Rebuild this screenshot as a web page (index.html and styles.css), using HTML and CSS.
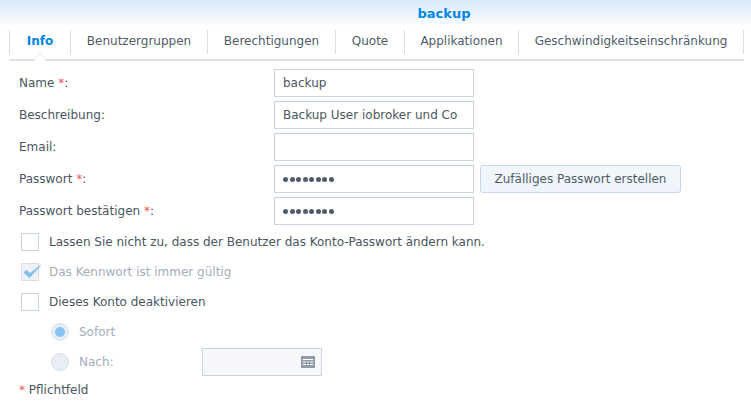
FILE: index.html
```
<!DOCTYPE html>
<html lang="de">
<head>
<meta charset="utf-8">
<title>backup</title>
<link rel="stylesheet" href="styles.css">
</head>
<body>
<header class="title-bar"><span class="title">backup</span></header>
<nav class="tabs">
  <span class="tab tab-active tab-info">Info</span>
  <span class="tab tab-groups">Benutzergruppen</span>
  <span class="tab tab-perm">Berechtigungen</span>
  <span class="tab tab-quota">Quote</span>
  <span class="tab tab-apps">Applikationen</span>
  <span class="tab tab-speed">Geschwindigkeitseinschränkung</span>
  <span class="tab-arrow"></span>
</nav>
<main class="form">
  <div class="row"><label class="label">Name <em>*</em>:</label><div class="input">backup</div></div>
  <div class="row"><label class="label">Beschreibung:</label><div class="input">Backup User iobroker und Co</div></div>
  <div class="row"><label class="label">Email:</label><div class="input"></div></div>
  <div class="row"><label class="label">Passwort <em>*</em>:</label><div class="input pw"><i></i><i></i><i></i><i></i><i></i><i></i><i></i><i></i></div><button class="btn">Zufälliges Passwort erstellen</button></div>
  <div class="row"><label class="label">Passwort bestätigen <em>*</em>:</label><div class="input pw"><i></i><i></i><i></i><i></i><i></i><i></i><i></i><i></i></div></div>
  <div class="checks">
    <div class="check"><span class="box"></span>Lassen Sie nicht zu, dass der Benutzer das Konto-Passwort ändern kann.</div>
    <div class="check disabled"><span class="box box-on"><svg width="20" height="18" viewBox="0 0 20 18"><path d="M2 9.5 L7.5 14.5 L18.5 2.5 L8 10.5 L4.5 7.5 Z" fill="#85bdec" stroke="#85bdec" stroke-width="1" stroke-linejoin="round"/></svg></span>Das Kennwort ist immer gültig</div>
    <div class="check"><span class="box"></span>Dieses Konto deaktivieren</div>
    <div class="check sub disabled"><span class="radio radio-on"></span>Sofort</div>
    <div class="check sub disabled"><span class="radio"></span><span class="after-label">Nach:</span><div class="date"><svg width="14" height="12" viewBox="0 0 14 12"><rect width="14" height="12" fill="#8f9ba8"/><path d="M2 3h10v1H2zM2 5.500h3v1H2zM6 5.500h2v1H6zM9 5.500h3v1H9zM2 8h3v1H2zM6 8h2v1H6zM9 8h3v1H9z" fill="#fff"/></svg></div></div>
  </div>
  <div class="note"><em>*</em> Pflichtfeld</div>
</main>
</body>
</html>
```
FILE: styles.css
```
* { box-sizing: border-box; }
html, body { margin: 0; padding: 0; }
body {
  width: 751px;
  height: 401px;
  overflow: hidden;
  background: #fff;
  font-family: "DejaVu Sans", Verdana, sans-serif;
  font-size: 12px;
  color: #4a5560;
}
em { font-style: normal; color: #f0575a; }
.title-bar {
  height: 30px;
  background: linear-gradient(#d8e9f9, #ffffff 92%);
  display: flex;
  justify-content: center;
  padding: 6px 0 0 137px;
}
.title { font-weight: 700; color: #0086e5; font-size: 13px; line-height: 15px; }
.tabs {
  position: relative;
  display: flex;
  height: 31px;
  margin-left: 9px;
  width: 735px;
  border-bottom: 2px solid #dde3e8;
  align-items: flex-start;
}
.tab {
  height: 24px;
  line-height: 23px;
  text-align: center;
  border-left: 1px solid #d3dde8;
  color: #4f5b68;
}
.tab-info { width: 61px; }
.tab-groups { width: 137px; }
.tab-perm { width: 128px; }
.tab-quota { width: 69px; }
.tab-apps { width: 114px; }
.tab-speed { width: 226px; border-right: 1px solid #d3dde8; }
.tab-active { color: #0086e5; font-weight: 700; }
.tab-arrow {
  position: absolute;
  left: 25px;
  top: 23px;
  width: 12px;
  height: 12px;
  background: #fff;
  border-left: 1px solid #dde3e8;
  border-top: 1px solid #dde3e8;
  transform: rotate(45deg) scale(.7);
}
.form { padding: 8px 0 0 19px; }
.row { display: flex; align-items: center; height: 28px; margin-bottom: 4px; }
.label { width: 255px; }
.input {
  width: 200px;
  height: 28px;
  border: 1px solid #c8d3e0;
  padding: 0 8px;
  line-height: 26px;
  color: #4a5560;
  background: #fff;
  white-space: nowrap;
}
.pw { display: flex; align-items: center; gap: 1.5px; }
.pw i { width: 5px; height: 5px; border-radius: 50%; background: #4f5b68; }
.btn {
  margin-left: 6px;
  width: 201px;
  height: 28px;
  border: 1px solid #c8d6e5;
  border-radius: 3px;
  background: linear-gradient(#f3f7fb, #eef4fa);
  font: inherit;
  color: #4f5b68;
  padding: 0;
}
.checks { margin-left: 2px; padding-top: 4px; }
.check { display: flex; align-items: center; height: 18px; margin-bottom: 12px; color: #4a5560; white-space: nowrap; }
.box { width: 18px; height: 18px; border: 1px solid #c8d3e0; margin-right: 10px; position: relative; background: #fff; flex: none; }
.box-on { background: #eef2f7; border-color: #d5dde6; }
.box svg { position: absolute; left: 0; top: -1px; }
.disabled { color: #a3adbb; }
.sub { margin-left: 30px; }
.radio { width: 18px; height: 18px; border-radius: 50%; border: 1px solid #d5dfea; background: #e9eef4; margin-right: 10px; position: relative; flex: none; }
.radio-on::after { content: ""; position: absolute; left: 3px; top: 3px; width: 10px; height: 10px; border-radius: 50%; background: #85c4f5; }
.after-label { width: 123px; }
.date {
  width: 120px;
  height: 28px;
  border: 1px solid #c8d3e0;
  background: #f5f7fa;
  display: flex;
  align-items: center;
  justify-content: flex-end;
  padding-right: 6px;
}
.note { margin-top: 5px; margin-top: 0; line-height: 14px; color: #4a5560; }
```
